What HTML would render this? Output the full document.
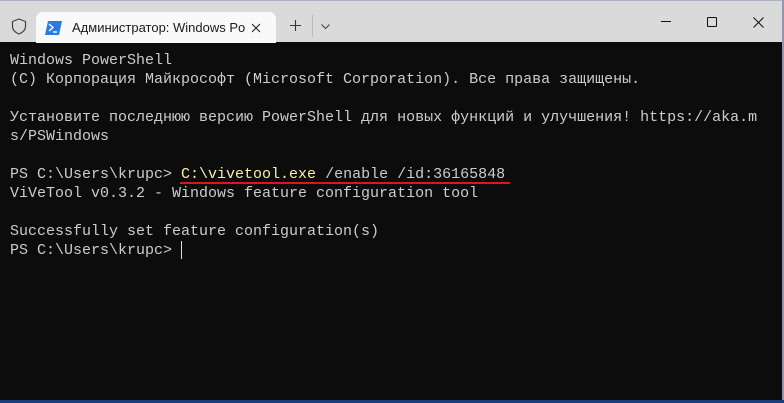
<!DOCTYPE html>
<html><head><meta charset="utf-8"><style>
html,body{margin:0;padding:0;width:784px;height:403px;overflow:hidden;background:#1a3e7a}
.win{position:absolute;left:0;top:0;width:782px;height:400px;background:#0c0c0c;border-right:2px solid #8f9aa8}
.bar{position:absolute;left:0;top:0;width:782px;height:42px;background:#dadada;border-top:1px solid #a9b4c2;box-sizing:border-box}
.tab{position:absolute;left:36px;top:11px;width:240px;height:31px;background:#f9f9f9;border-radius:7px 7px 0 0}
.tt{position:absolute;left:36px;top:8px;font:13px "Liberation Sans","Noto Sans CJK SC",sans-serif;color:#1a1a1a;white-space:nowrap;width:200px;overflow:hidden}
pre{position:absolute;left:10px;top:51px;margin:0;font:15px/19.05px "Liberation Mono",monospace;color:#cccccc}
.y{color:#f9f1a5}
</style></head><body>
<div class="win">
<div class="bar">
<svg style="position:absolute;left:11px;top:17px" width="16" height="17" viewBox="0 0 16 17"><path d="M8 1 L14.5 3.5 V8.5 C14.5 12 11.5 14.5 8 16 C4.5 14.5 1.5 12 1.5 8.5 V3.5 Z" fill="none" stroke="#444" stroke-width="1.2"/></svg>
<div class="tab">
<svg style="position:absolute;left:9px;top:9px" width="17" height="14" viewBox="0 0 17 14"><path d="M3 0 H17 L14 14 H0 Z" fill="#2a7be0"/><path d="M4 3 L8 6.5 L4 10" stroke="#fff" stroke-width="1.4" fill="none"/><path d="M8 11 H12" stroke="#fff" stroke-width="1.4"/></svg>
<div class="tt">Администратор: Windows Po</div>
<svg style="position:absolute;left:215px;top:11px" width="10" height="10"><path d="M1 1 L9 9 M9 1 L1 9" stroke="#333" stroke-width="1.2"/></svg>
</div>
<svg style="position:absolute;left:290px;top:19px" width="11" height="11"><path d="M5.5 0 V11 M0 5.5 H11" stroke="#333" stroke-width="1.1"/></svg>
<div style="position:absolute;left:312px;top:14px;width:1px;height:22px;background:#bbb"></div>
<svg style="position:absolute;left:321px;top:23px" width="9" height="6"><path d="M0.5 0.5 L4.5 4.5 L8.5 0.5" stroke="#444" fill="none" stroke-width="1.1"/></svg>
<div style="position:absolute;left:661px;top:20px;width:10px;height:1px;background:#111"></div>
<div style="position:absolute;left:707px;top:16px;width:8px;height:8px;border:1px solid #111;border-radius:1px"></div>
<svg style="position:absolute;left:753px;top:16px" width="11" height="11"><path d="M0.5 0.5 L10.5 10.5 M10.5 0.5 L0.5 10.5" stroke="#111" stroke-width="1"/></svg>
</div>
<pre>Windows PowerShell
(C) Корпорация Майкрософт (Microsoft Corporation). Все права защищены.

Установите последнюю версию PowerShell для новых функций и улучшения! https://aka.m
s/PSWindows

PS C:\Users\krupc&gt; <span class="y">C:\vivetool.exe</span> /enable /id:36165848
ViVeTool v0.3.2 - Windows feature configuration tool

Successfully set feature configuration(s)
PS C:\Users\krupc&gt; </pre>
<div style="position:absolute;left:180px;top:182px;width:330px;height:2px;background:#e0141a"></div>
<div style="position:absolute;left:181px;top:241px;width:1px;height:18px;background:#ddd"></div>
</div>
</body></html>
